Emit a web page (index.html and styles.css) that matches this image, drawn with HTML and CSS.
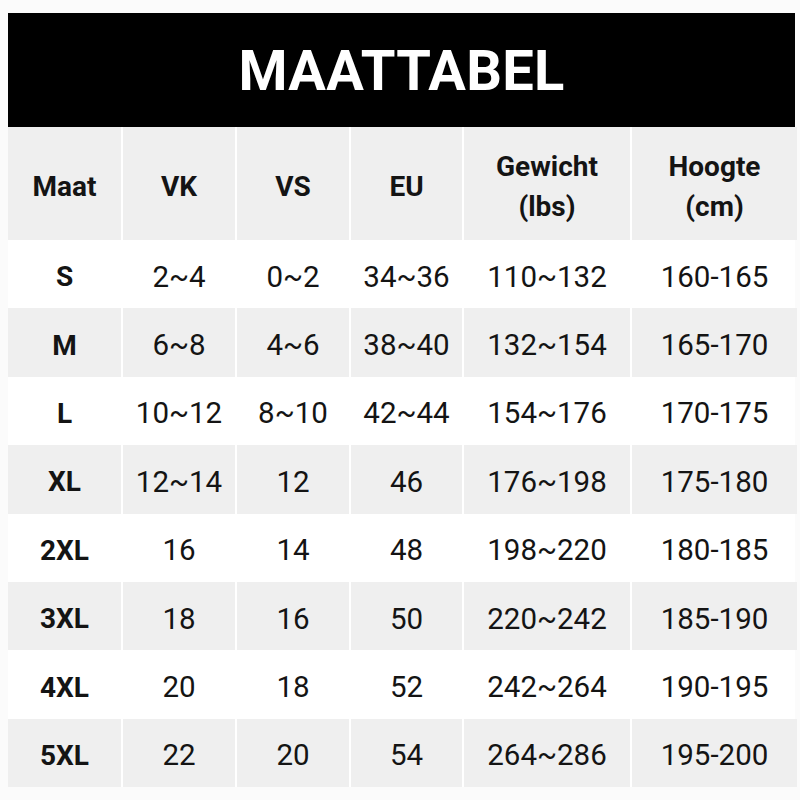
FILE: index.html
```html
<!DOCTYPE html>
<html lang="nl">
<head>
<meta charset="utf-8">
<title>Maattabel</title>
<link rel="stylesheet" href="styles.css">
</head>
<body>
<div class="chart">
  <div class="title">MAATTABEL</div>
  <div class="grid">
    <div class="row head">
      <div class="cell">Maat</div><div class="cell">VK</div><div class="cell">VS</div><div class="cell">EU</div><div class="cell">Gewicht<br>(lbs)</div><div class="cell">Hoogte<br>(cm)</div>
    </div>
    <div class="row">
      <div class="cell size">S</div><div class="cell">2~4</div><div class="cell">0~2</div><div class="cell">34~36</div><div class="cell">110~132</div><div class="cell">160-165</div>
    </div>
    <div class="row alt">
      <div class="cell size">M</div><div class="cell">6~8</div><div class="cell">4~6</div><div class="cell">38~40</div><div class="cell">132~154</div><div class="cell">165-170</div>
    </div>
    <div class="row">
      <div class="cell size">L</div><div class="cell">10~12</div><div class="cell">8~10</div><div class="cell">42~44</div><div class="cell">154~176</div><div class="cell">170-175</div>
    </div>
    <div class="row alt">
      <div class="cell size">XL</div><div class="cell">12~14</div><div class="cell">12</div><div class="cell">46</div><div class="cell">176~198</div><div class="cell">175-180</div>
    </div>
    <div class="row">
      <div class="cell size">2XL</div><div class="cell">16</div><div class="cell">14</div><div class="cell">48</div><div class="cell">198~220</div><div class="cell">180-185</div>
    </div>
    <div class="row alt">
      <div class="cell size">3XL</div><div class="cell">18</div><div class="cell">16</div><div class="cell">50</div><div class="cell">220~242</div><div class="cell">185-190</div>
    </div>
    <div class="row">
      <div class="cell size">4XL</div><div class="cell">20</div><div class="cell">18</div><div class="cell">52</div><div class="cell">242~264</div><div class="cell">190-195</div>
    </div>
    <div class="row alt">
      <div class="cell size">5XL</div><div class="cell">22</div><div class="cell">20</div><div class="cell">54</div><div class="cell">264~286</div><div class="cell">195-200</div>
    </div>
  </div>
</div>
</body>
</html>
```
FILE: styles.css
```css
html, body {
  margin: 0;
  padding: 0;
  background: #fbfbfb;
}
body {
  font-family: Roboto, "Liberation Sans", Arial, sans-serif;
  color: #141414;
}
.chart {
  width: 787px;
  margin: 13px 0 0 8px;
}
.title {
  height: 114px;
  background: #000;
  color: #fff;
  font-weight: 700;
  font-size: 56px;
  display: flex;
  align-items: center;
  justify-content: center;
  letter-spacing: 0.3px;
  padding-top: 2px;
  box-sizing: border-box;
}
.grid {
  background: #fff;
}
.row {
  display: grid;
  grid-template-columns: 113px 112px 112px 111px 166px 165px;
  column-gap: 2px;
  height: 68.4px;
}
.row.head {
  height: 113px;
}
.cell {
  display: flex;
  align-items: center;
  justify-content: center;
  text-align: center;
  font-size: 29.5px;
  padding-top: 5px;
  box-sizing: border-box;
}
.head .cell,
.alt .cell {
  background: #efefef;
}
.head .cell {
  font-weight: 700;
  font-size: 28px;
  line-height: 40px;
  padding-top: 6px;
}
.size {
  font-weight: 700;
  font-size: 28px;
}
```
